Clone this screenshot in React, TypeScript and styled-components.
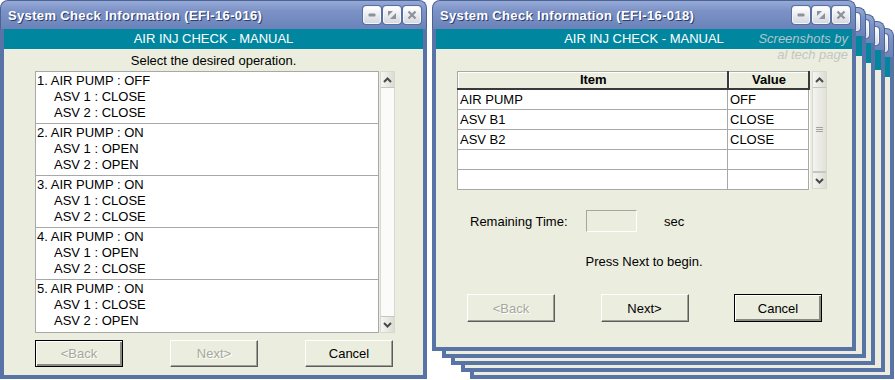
import React from 'react';
import styled, { createGlobalStyle } from 'styled-components';

const GlobalStyle = createGlobalStyle`
  body {
    margin: 0;
    padding: 0;
    background: #ffffff;
    font-family: "Liberation Sans", Arial, sans-serif;
  }
`;

const FRAME = '#5874a6';
const FACE = '#ebeddf';
const TEAL = '#00879f';

const Desktop = styled.div`
  display: flex;
  gap: 5px;
  width: 895px;
  height: 380px;
  overflow: hidden;
`;

const Window = styled.div<{ $w: number; $h: number }>`
  width: ${(p) => p.$w}px;
  height: ${(p) => p.$h}px;
  display: flex;
  flex-direction: column;
  flex-shrink: 0;
`;

const TitleBar = styled.div`
  height: 29px;
  flex-shrink: 0;
  box-sizing: border-box;
  display: flex;
  align-items: center;
  padding: 0 5px 0 7px;
  border-radius: 8px 8px 0 0;
  border: 1px solid #4a6494;
  border-bottom: none;
  background: linear-gradient(#97aad8 0%, #7c92c6 35%, #6b83ba 100%);
`;

const Title = styled.div`
  flex: 1;
  color: #ffffff;
  font-weight: bold;
  font-size: 13px;
  letter-spacing: 0.35px;
  text-shadow: 1px 1px 0 #2c3d6e;
  white-space: nowrap;
`;

const Caption = styled.div`
  display: flex;
  gap: 2px;
`;

const CapButton = styled.div`
  width: 18px;
  height: 18px;
  box-sizing: border-box;
  border: 1px solid #f4f6fb;
  border-radius: 3px;
  background: linear-gradient(#ffffff, #d6d9e0);
  box-shadow: 0 0 0 1px #56709f;
  display: flex;
  align-items: center;
  justify-content: center;
`;

const Body = styled.div`
  flex: 1;
  position: relative;
  display: flex;
  flex-direction: column;
  background: ${FACE};
  border: 4px solid ${FRAME};
  border-top: none;
`;

const Banner = styled.div`
  height: 20px;
  flex-shrink: 0;
  background: ${TEAL};
  color: #ffffff;
  font-size: 13px;
  line-height: 20px;
  text-align: center;
`;

const Prompt = styled.div`
  margin-top: 4px;
  height: 16px;
  font-size: 13px;
  line-height: 16px;
  text-align: center;
  color: #000;
`;

const ListBox = styled.div`
  display: flex;
  gap: 1px;
  margin: 2px 0 0 31px;
  height: 262px;
`;

const Items = styled.div`
  width: 344px;
  box-sizing: border-box;
  border: 1px solid #a8a8a8;
  background: #ffffff;
  overflow: hidden;
`;

const Item = styled.div`
  height: 52px;
  box-sizing: border-box;
  padding: 1px 0 0 1px;
  border-bottom: 1px solid #a8a8a8;
  &:last-child {
    border-bottom: none;
  }
`;

const Line = styled.div<{ $indent?: boolean }>`
  height: 16px;
  line-height: 16px;
  font-size: 13px;
  color: #000;
  padding-left: ${(p) => (p.$indent ? 17 : 0)}px;
  white-space: nowrap;
`;

const ScrollBar = styled.div`
  width: 15px;
  box-sizing: border-box;
  display: flex;
  flex-direction: column;
  background: #fbfbf9;
  border: 1px solid #d8d8d2;
`;

const Arrow = styled.div`
  height: 15px;
  flex-shrink: 0;
  background: linear-gradient(90deg, #f6f6f2, #dcdcd4);
  border-bottom: 1px solid #c6c6c0;
  display: flex;
  align-items: center;
  justify-content: center;
  &:last-child {
    border-bottom: none;
    border-top: 1px solid #c6c6c0;
  }
`;

const Track = styled.div`
  flex: 1;
`;

const Thumb = styled.div`
  flex: 1;
  background: linear-gradient(90deg, #f4f4f0, #e2e2da);
  border-bottom: 1px solid #c6c6c0;
  display: flex;
  align-items: center;
  justify-content: center;
`;

const ButtonRow = styled.div<{ $top: number }>`
  display: flex;
  justify-content: space-between;
  margin-top: ${(p) => p.$top}px;
  padding: 0 30px 0 31px;
`;

const Btn = styled.div<{ $disabled?: boolean; $focus?: boolean; $h: number }>`
  width: 88px;
  height: ${(p) => p.$h}px;
  box-sizing: border-box;
  display: flex;
  align-items: center;
  justify-content: center;
  font-size: 13px;
  background: ${FACE};
  color: ${(p) => (p.$disabled ? '#a6a89c' : '#000')};
  text-shadow: ${(p) => (p.$disabled ? '1px 1px 0 #ffffff' : 'none')};
  border: 1px solid;
  border-color: ${(p) => (p.$focus ? '#000 #000 #000 #000' : '#ffffff #5c5c5c #5c5c5c #ffffff')};
  box-shadow: ${(p) =>
    p.$focus ? 'inset 1px 1px #ffffff, inset -2px -2px #8a8a84' : 'inset -1px -1px #a0a098'};
`;

const Watermark = styled.div`
  position: absolute;
  right: 4px;
  top: 2px;
  text-align: right;
  font-size: 13px;
  font-style: italic;
  line-height: 16px;
  color: #b2c4cc;
  & span {
    display: block;
    color: #c4c6c0;
  }
`;

const TableArea = styled.div`
  display: flex;
  gap: 2px;
  margin: 22px 0 0 21px;
  height: 118px;
`;

const Grid = styled.table`
  width: 351px;
  border-collapse: collapse;
  background: #ffffff;
  font-size: 13px;
  table-layout: fixed;
  & th,
  & td {
    padding: 0 0 0 2px;
    text-align: left;
    white-space: nowrap;
  }
`;

const Head = styled.th`
  height: 17px;
  box-sizing: border-box;
  background: ${FACE};
  font-weight: bold;
  text-align: center !important;
  border: 1px solid #a8a8a8;
  border-bottom: 2px solid #3a3a3a;
  border-right: 2px solid #3a3a3a;
  box-shadow: inset 1px 1px #ffffff;
`;

const Cell = styled.td`
  height: 19px;
  border: 1px solid #a8a8a8;
  color: #000;
`;

const TimerRow = styled.div`
  display: flex;
  align-items: center;
  margin: 21px 0 0 34px;
  height: 22px;
  font-size: 13px;
`;

const TimerLabel = styled.span`
  width: 116px;
`;

const TimerBox = styled.div`
  width: 51px;
  height: 22px;
  box-sizing: border-box;
  border: 1px solid;
  border-color: #a6a69e #ffffff #ffffff #a6a69e;
  margin-right: 27px;
`;

const Status = styled.div`
  margin-top: 22px;
  height: 16px;
  line-height: 16px;
  font-size: 13px;
  text-align: center;
`;

const Stack = styled.div`
  position: relative;
  flex: 1;
  height: 380px;
`;

const Front = styled.div`
  position: relative;
  z-index: 10;
`;

const Behind = styled.div<{ $i: number }>`
  position: absolute;
  left: ${(p) => Math.round(p.$i * 9.5)}px;
  top: ${(p) => p.$i * 7}px;
  z-index: ${(p) => 10 - p.$i};
`;

const Chevron = ({ up }: { up?: boolean }) => (
  <svg width="9" height="6" viewBox="0 0 9 6">
    <polyline
      points={up ? '1,5 4.5,1.5 8,5' : '1,1 4.5,4.5 8,1'}
      fill="none"
      stroke="#4a4a4a"
      strokeWidth="2"
    />
  </svg>
);

const CaptionButtons = () => (
  <Caption>
    <CapButton>
      <svg width="10" height="10" viewBox="0 0 10 10">
        <rect x="1.5" y="3.5" width="7" height="3" rx="1" fill="#8c919c" />
      </svg>
    </CapButton>
    <CapButton>
      <svg width="10" height="10" viewBox="0 0 10 10">
        <polygon points="1,1 6,1 1,6" fill="#8c919c" />
        <polygon points="9,9 9,3 3,9" fill="#8c919c" />
      </svg>
    </CapButton>
    <CapButton>
      <svg width="10" height="10" viewBox="0 0 10 10">
        <path d="M1.5 1.5 L8.5 8.5 M8.5 1.5 L1.5 8.5" stroke="#8c919c" strokeWidth="2.2" />
      </svg>
    </CapButton>
  </Caption>
);

const operations = [
  ['1. AIR PUMP : OFF', 'ASV 1 : CLOSE', 'ASV 2 : CLOSE'],
  ['2. AIR PUMP : ON', 'ASV 1 : OPEN', 'ASV 2 : OPEN'],
  ['3. AIR PUMP : ON', 'ASV 1 : CLOSE', 'ASV 2 : CLOSE'],
  ['4. AIR PUMP : ON', 'ASV 1 : OPEN', 'ASV 2 : CLOSE'],
  ['5. AIR PUMP : ON', 'ASV 1 : CLOSE', 'ASV 2 : OPEN'],
];

const values = [
  ['AIR PUMP', 'OFF'],
  ['ASV B1', 'CLOSE'],
  ['ASV B2', 'CLOSE'],
  ['', ''],
  ['', ''],
];

function SelectWindow() {
  return (
    <Window $w={427} $h={379}>
      <TitleBar>
        <Title>System Check Information (EFI-16-016)</Title>
        <CaptionButtons />
      </TitleBar>
      <Body>
        <Banner>AIR INJ CHECK - MANUAL</Banner>
        <Prompt>Select the desired operation.</Prompt>
        <ListBox>
          <Items>
            {operations.map((op) => (
              <Item key={op[0]}>
                <Line>{op[0]}</Line>
                <Line $indent>{op[1]}</Line>
                <Line $indent>{op[2]}</Line>
              </Item>
            ))}
          </Items>
          <ScrollBar>
            <Arrow>
              <Chevron up />
            </Arrow>
            <Track />
            <Arrow>
              <Chevron />
            </Arrow>
          </ScrollBar>
        </ListBox>
        <ButtonRow $top={7}>
          <Btn $h={27} $disabled $focus>
            &lt;Back
          </Btn>
          <Btn $h={27} $disabled>
            Next&gt;
          </Btn>
          <Btn $h={27}>Cancel</Btn>
        </ButtonRow>
      </Body>
    </Window>
  );
}

function EmptyWindow() {
  return (
    <Window $w={424} $h={351}>
      <TitleBar>
        <Title />
        <CaptionButtons />
      </TitleBar>
      <Body>
        <Banner />
      </Body>
    </Window>
  );
}

function TimerWindow() {
  return (
    <Window $w={424} $h={351}>
      <TitleBar>
        <Title>System Check Information (EFI-16-018)</Title>
        <CaptionButtons />
      </TitleBar>
      <Body>
        <Banner>AIR INJ CHECK - MANUAL</Banner>
        <Watermark>
          Screenshots by
          <span>al tech page</span>
        </Watermark>
        <TableArea>
          <Grid>
            <colgroup>
              <col style={{ width: 270 }} />
              <col style={{ width: 81 }} />
            </colgroup>
            <thead>
              <tr>
                <Head>Item</Head>
                <Head>Value</Head>
              </tr>
            </thead>
            <tbody>
              {values.map((row, i) => (
                <tr key={i}>
                  <Cell>{row[0]}</Cell>
                  <Cell>{row[1]}</Cell>
                </tr>
              ))}
            </tbody>
          </Grid>
          <ScrollBar>
            <Arrow>
              <Chevron up />
            </Arrow>
            <Thumb>
              <svg width="7" height="7" viewBox="0 0 7 7">
                <path d="M0 1.5 H7 M0 3.5 H7 M0 5.5 H7" stroke="#a4a49c" strokeWidth="1" />
              </svg>
            </Thumb>
            <Arrow>
              <Chevron />
            </Arrow>
          </ScrollBar>
        </TableArea>
        <TimerRow>
          <TimerLabel>Remaining Time:</TimerLabel>
          <TimerBox />
          <span>sec</span>
        </TimerRow>
        <Status>Press Next to begin.</Status>
        <ButtonRow $top={24}>
          <Btn $h={28} $disabled>
            &lt;Back
          </Btn>
          <Btn $h={28}>Next&gt;</Btn>
          <Btn $h={28} $focus>
            Cancel
          </Btn>
        </ButtonRow>
      </Body>
    </Window>
  );
}

export default function App() {
  return (
    <>
      <GlobalStyle />
      <Desktop>
        <SelectWindow />
        <Stack>
          {[4, 3, 2, 1].map((i) => (
            <Behind key={i} $i={i}>
              <EmptyWindow />
            </Behind>
          ))}
          <Front>
            <TimerWindow />
          </Front>
        </Stack>
      </Desktop>
    </>
  );
}
